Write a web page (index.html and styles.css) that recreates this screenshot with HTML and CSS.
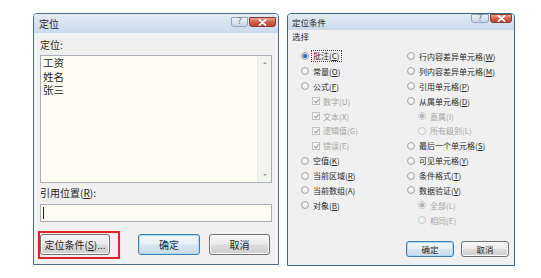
FILE: index.html
```html
<!DOCTYPE html>
<html lang="zh-CN">
<head>
    <meta charset="UTF-8">
    <meta name="viewport" content="width=device-width, initial-scale=1.0">
    <title>定位 / 定位条件</title>
    <link rel="stylesheet" href="styles.css">
</head>
<body>
    <div class="page">
        <!-- 定位 -->
        <div class="dlg dlg-goto">
            <div class="titlebar">
                <span class="title">定位</span>
                <div class="caption-btns">
                    <span class="cap-help">?</span>
                    <span class="cap-close">
                        <svg width="9" height="7" viewBox="0 0 9 7"><path d="M1.5 0.8 L7.5 6.2 M7.5 0.8 L1.5 6.2" stroke="#fff" stroke-width="1.8" stroke-linecap="round"/></svg>
                    </span>
                </div>
            </div>
            <div class="body">
                <div class="label">定位:</div>
                <div class="listbox">
                    <div class="items">
                        <div>工资</div>
                        <div>姓名</div>
                        <div>张三</div>
                    </div>
                    <div class="scrollbar">
                        <span class="arrow up"></span>
                        <span class="arrow down"></span>
                    </div>
                </div>
                <div class="label ref-label">引用位置(<u>R</u>):</div>
                <div class="textbox"><span class="caret"></span></div>
                <div class="btn-row">
                    <span class="mark"><button class="btn btn-special">定位条件(<u>S</u>)...</button></span>
                    <button class="btn btn-default btn-ok">确定</button>
                    <button class="btn btn-cancel">取消</button>
                </div>
            </div>
        </div>

        <!-- 定位条件 -->
        <div class="dlg dlg-special">
            <div class="titlebar">
                <span class="title">定位条件</span>
                <div class="caption-btns">
                    <span class="cap-help">?</span>
                    <span class="cap-close">
                        <svg width="9" height="7" viewBox="0 0 9 7"><path d="M1.5 0.8 L7.5 6.2 M7.5 0.8 L1.5 6.2" stroke="#fff" stroke-width="1.8" stroke-linecap="round"/></svg>
                    </span>
                </div>
            </div>
            <div class="body">
                <div class="label">选择</div>
                <div class="opts">
                    <div class="col col-left">
                        <div class="opt"><span class="radio on"></span><span class="focus">批注(<u>C</u>)</span></div>
                        <div class="opt"><span class="radio"></span>常量(<u>O</u>)</div>
                        <div class="opt"><span class="radio"></span>公式(<u>F</u>)</div>
                        <div class="opt sub off"><span class="check"></span>数字(U)</div>
                        <div class="opt sub off"><span class="check"></span>文本(X)</div>
                        <div class="opt sub off"><span class="check"></span>逻辑值(G)</div>
                        <div class="opt sub off"><span class="check"></span>错误(E)</div>
                        <div class="opt"><span class="radio"></span>空值(<u>K</u>)</div>
                        <div class="opt"><span class="radio"></span>当前区域(<u>R</u>)</div>
                        <div class="opt"><span class="radio"></span>当前数组(A)</div>
                        <div class="opt"><span class="radio"></span>对象(<u>B</u>)</div>
                    </div>
                    <div class="col">
                        <div class="opt"><span class="radio"></span>行内容差异单元格(<u>W</u>)</div>
                        <div class="opt"><span class="radio"></span>列内容差异单元格(<u>M</u>)</div>
                        <div class="opt"><span class="radio"></span>引用单元格(<u>P</u>)</div>
                        <div class="opt"><span class="radio"></span>从属单元格(<u>D</u>)</div>
                        <div class="opt sub off"><span class="radio on"></span>直属(I)</div>
                        <div class="opt sub off"><span class="radio"></span>所有级别(L)</div>
                        <div class="opt"><span class="radio"></span>最后一个单元格(<u>S</u>)</div>
                        <div class="opt"><span class="radio"></span>可见单元格(<u>Y</u>)</div>
                        <div class="opt"><span class="radio"></span>条件格式(<u>T</u>)</div>
                        <div class="opt"><span class="radio"></span>数据验证(<u>V</u>)</div>
                        <div class="opt sub off"><span class="radio on"></span>全部(L)</div>
                        <div class="opt sub off"><span class="radio"></span>相同(E)</div>
                    </div>
                </div>
                <div class="btn-row btn-row-r">
                    <button class="btn btn-default btn-sm">确定</button>
                    <button class="btn btn-sm">取消</button>
                </div>
            </div>
        </div>
    </div>
</body>
</html>
```

FILE: styles.css
```css
:root {
    --frame: #4f6f8e;
    --face: #f0f0f0;
    --text: #1e1e1e;
    --disabled: #a6a6a6;
    --field: #fcfcf3;
}
* { box-sizing: border-box; }
body {
    margin: 0;
    background: #fff;
    color: var(--text);
    font-family: "Noto Sans CJK SC", "Noto Sans", sans-serif;
}
.page { display: flex; align-items: flex-start; gap: 8px; padding: 13px 0 0 33px; }

/* window frame */
.dlg {
    display: flex;
    flex-direction: column;
    background: var(--face);
    border: 1px solid var(--frame);
    border-radius: 4px 4px 0 0;
    overflow: hidden;
}
.dlg-goto { width: 246px; height: 252px; }
.dlg-special { width: 228px; height: 253px; border-color: #3e6a88; }

.titlebar {
    display: flex;
    justify-content: space-between;
    align-items: flex-start;
    background: linear-gradient(#e2ebf6, #cbdaec);
    flex: none;
}
.dlg-goto .titlebar { height: 19px; }
.dlg-goto .title { font-size: 10px; line-height: 19px; padding-left: 5px; }
.dlg-special .titlebar { height: 16px; }
.dlg-special .title { font-size: 8.5px; line-height: 17px; padding-left: 4px; }

.caption-btns { display: flex; gap: 1px; margin-right: 2px; }
.dlg-goto .caption-btns { margin-top: 3px; }
.cap-help, .cap-close {
    display: flex;
    align-items: center;
    justify-content: center;
    height: 10px;
    border-radius: 0 0 3px 3px;
}
.cap-help {
    width: 17px;
    background: linear-gradient(#eef3f9, #c9d6e5);
    border: 1px solid #8fa5bd;
    color: #5f6f80;
    font-size: 8px;
    line-height: 8px;
    font-family: "DejaVu Sans", sans-serif;
}
.cap-close {
    width: 27px;
    background: linear-gradient(#e9a595, #cf5a48 55%, #c24535);
    border: 1px solid #8c3a2f;
}
.dlg-special .cap-help { width: 18px; height: 9px; }
.dlg-special .cap-close { width: 22px; height: 9px; }

.body { display: flex; flex-direction: column; flex: 1; }
.dlg-goto .body { padding: 5px 6px 0 6px; font-size: 10px; }
.label { line-height: 14px; }

/* list box */
.listbox {
    display: flex;
    height: 128px;
    margin-top: 3px;
    border: 1px solid #a7aeb8;
    background: var(--field);
}
.items { flex: 1; padding-left: 2px; font-size: 10.5px; line-height: 13.5px; }
.scrollbar {
    position: relative;
    width: 14px;
    background: #f4f4ee;
    border-left: 1px solid #ecece6;
}
.arrow {
    position: absolute;
    left: 5px;
    width: 0;
    height: 0;
    border-left: 2px solid transparent;
    border-right: 2px solid transparent;
}
.arrow.up { top: 6px; border-bottom: 2px solid #9a9a9a; }
.arrow.down { bottom: 6px; border-top: 2px solid #9a9a9a; }

.ref-label { margin-top: 3px; }
.textbox {
    height: 18px;
    margin-top: 4px;
    border: 1px solid #a7aeb8;
    background: var(--field);
    padding: 2px 0 0 2px;
}
.caret { display: block; width: 1px; height: 12px; background: #222; }

/* buttons */
.btn {
    height: 21px;
    padding: 0;
    border: 1px solid #707070;
    border-radius: 3px;
    background: linear-gradient(#f6f6f6, #ebebeb 48%, #dcdcdc 52%, #cfcfcf);
    color: var(--text);
    font-family: inherit;
    font-size: 10px;
    box-shadow: inset 0 0 0 1px #fbfbfb;
}
.btn u { text-decoration-thickness: 1px; }
.btn-default {
    border-color: #3d7fb3;
    background: linear-gradient(#f2f8fc, #e6f0f8 48%, #d6e5f0 52%, #cadbe8);
    box-shadow: inset 0 0 0 1px #a9dcf5;
}
.btn-row { display: flex; margin-top: 12px; }
.mark { position: relative; display: flex; }
.mark::after {
    content: "";
    position: absolute;
    top: -3px;
    left: -2px;
    right: -10px;
    bottom: -4px;
    border: 2px solid #e2232b;
}
.btn-special { width: 70px; }
.btn-ok { width: 62px; margin-left: 28px; }
.btn-cancel { width: 61px; margin-left: 9px; }

/* 定位条件 */
.dlg-special .body { padding: 1px 0 0 4px; font-size: 8.5px; }
.dlg-special .label { line-height: 11px; }
.opts { display: flex; margin-top: 7px; padding-left: 9px; font-size: 8px; }
.col-left { width: 106px; }
.opt {
    display: flex;
    align-items: center;
    height: 14.9px;
    white-space: nowrap;
    color: #2a2a2a;
}
.opt u { text-decoration-thickness: 1px; text-underline-offset: 1px; }
.sub { padding-left: 11px; }
.off { color: var(--disabled); }
.radio {
    flex: none;
    width: 8px;
    height: 8px;
    margin-right: 4px;
    border: 1px solid #a2a6ab;
    border-radius: 50%;
    background: radial-gradient(circle at 50% 40%, #ffffff, #dedede);
}
.radio.on { background: radial-gradient(circle, #3b73b8 0 1.8px, #dbe6f3 2.6px, #f5f7fa); }
.off .radio { border-color: #c9c9c9; background: #f3f3f3; }
.off .radio.on { background: radial-gradient(circle, #b4b4b4 0 1.8px, #f3f3f3 2.6px); }
.check {
    position: relative;
    flex: none;
    width: 8px;
    height: 8px;
    margin-right: 3px;
    border: 1px solid #c2c2c2;
    background: #f6f6f6;
}
.check::after {
    content: "";
    position: absolute;
    left: 1.5px;
    top: 0;
    width: 2px;
    height: 4px;
    border-right: 1px solid #9c9c9c;
    border-bottom: 1px solid #9c9c9c;
    transform: rotate(40deg);
}
.focus { border: 1px dotted #444; padding: 0 1px; margin-left: -2px; line-height: 10px; }

.btn-row-r { justify-content: flex-end; gap: 7px; padding-right: 5px; margin-top: 13px; }
.btn-sm { width: 48px; height: 16px; font-size: 8.5px; }
```
